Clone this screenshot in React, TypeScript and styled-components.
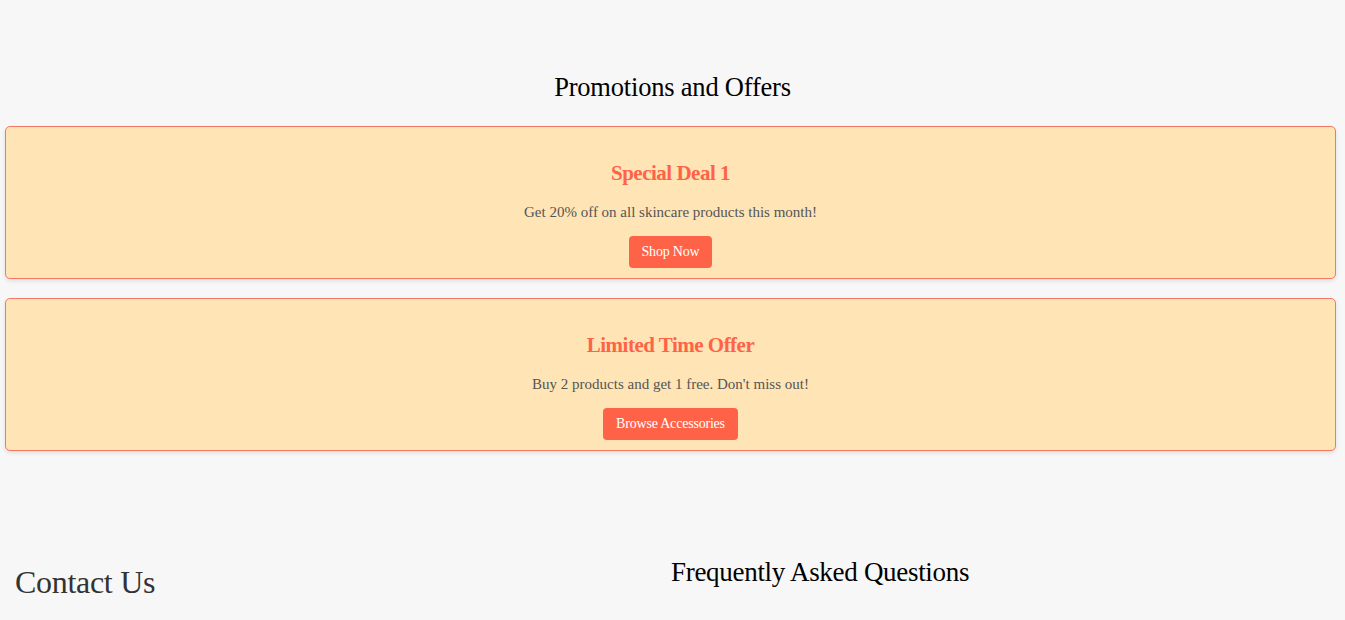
import React from "react";
import styled, { createGlobalStyle } from "styled-components";

const GlobalStyle = createGlobalStyle`
  html, body {
    margin: 0;
    padding: 0;
    background: #f7f7f7;
    font-family: "Liberation Serif", "Times New Roman", serif;
  }
`;

const Page = styled.div`
  width: 100%;
`;

const PromoSection = styled.section`
  padding: 67px 0 0;
`;

const SectionTitle = styled.h2`
  margin: 0 0 19px;
  text-align: center;
  font-size: 26.5px;
  font-weight: 400;
  line-height: 40px;
  color: #000;
  letter-spacing: -0.2px;
`;

const Card = styled.div`
  margin: 0 9px 19px 5px;
  padding: 10px 20px;
  background: #ffe4b5;
  border: 1px solid #f07a66;
  border-radius: 5px;
  box-shadow: 0 2px 4px rgba(0, 0, 0, 0.1);
  display: flex;
  flex-direction: column;
  align-items: center;
  text-align: center;
`;

const CardTitle = styled.h3`
  margin: 22px 0 13px;
  font-size: 21px;
  line-height: 28px;
  font-weight: 700;
  color: #ff6347;
  letter-spacing: -0.5px;
`;

const CardText = styled.p`
  margin: 0 0 12px;
  font-size: 15px;
  line-height: 24px;
  color: #555;
`;

const ActionButton = styled.button`
  background: #ff6347;
  color: #fff;
  border: none;
  border-radius: 4px;
  height: 32px;
  padding: 0 13px;
  font-family: inherit;
  font-size: 14px;
  letter-spacing: -0.2px;
  cursor: pointer;
`;

const BottomRow = styled.div`
  display: grid;
  grid-template-columns: 656px 1fr;
  margin-top: 82px;
`;

const Column = styled.div`
  padding: 0 15px;
`;

const ContactTitle = styled.h2`
  margin: 29px 0 0;
  font-size: 32px;
  line-height: 40px;
  font-weight: 400;
  color: #333;
  letter-spacing: -0.3px;
`;

const FaqTitle = styled.h2`
  margin: 19px 0 0;
  font-size: 27px;
  line-height: 40px;
  font-weight: 400;
  color: #000;
  letter-spacing: -0.3px;
`;

const promos = [
  {
    title: "Special Deal 1",
    text: "Get 20% off on all skincare products this month!",
    cta: "Shop Now",
  },
  {
    title: "Limited Time Offer",
    text: "Buy 2 products and get 1 free. Don't miss out!",
    cta: "Browse Accessories",
  },
];

export default function App() {
  return (
    <Page>
      <GlobalStyle />
      <PromoSection>
        <SectionTitle>Promotions and Offers</SectionTitle>
        {promos.map((p) => (
          <Card key={p.title}>
            <CardTitle>{p.title}</CardTitle>
            <CardText>{p.text}</CardText>
            <ActionButton>{p.cta}</ActionButton>
          </Card>
        ))}
      </PromoSection>
      <BottomRow>
        <Column>
          <ContactTitle>Contact Us</ContactTitle>
        </Column>
        <Column>
          <FaqTitle>Frequently Asked Questions</FaqTitle>
        </Column>
      </BottomRow>
    </Page>
  );
}
